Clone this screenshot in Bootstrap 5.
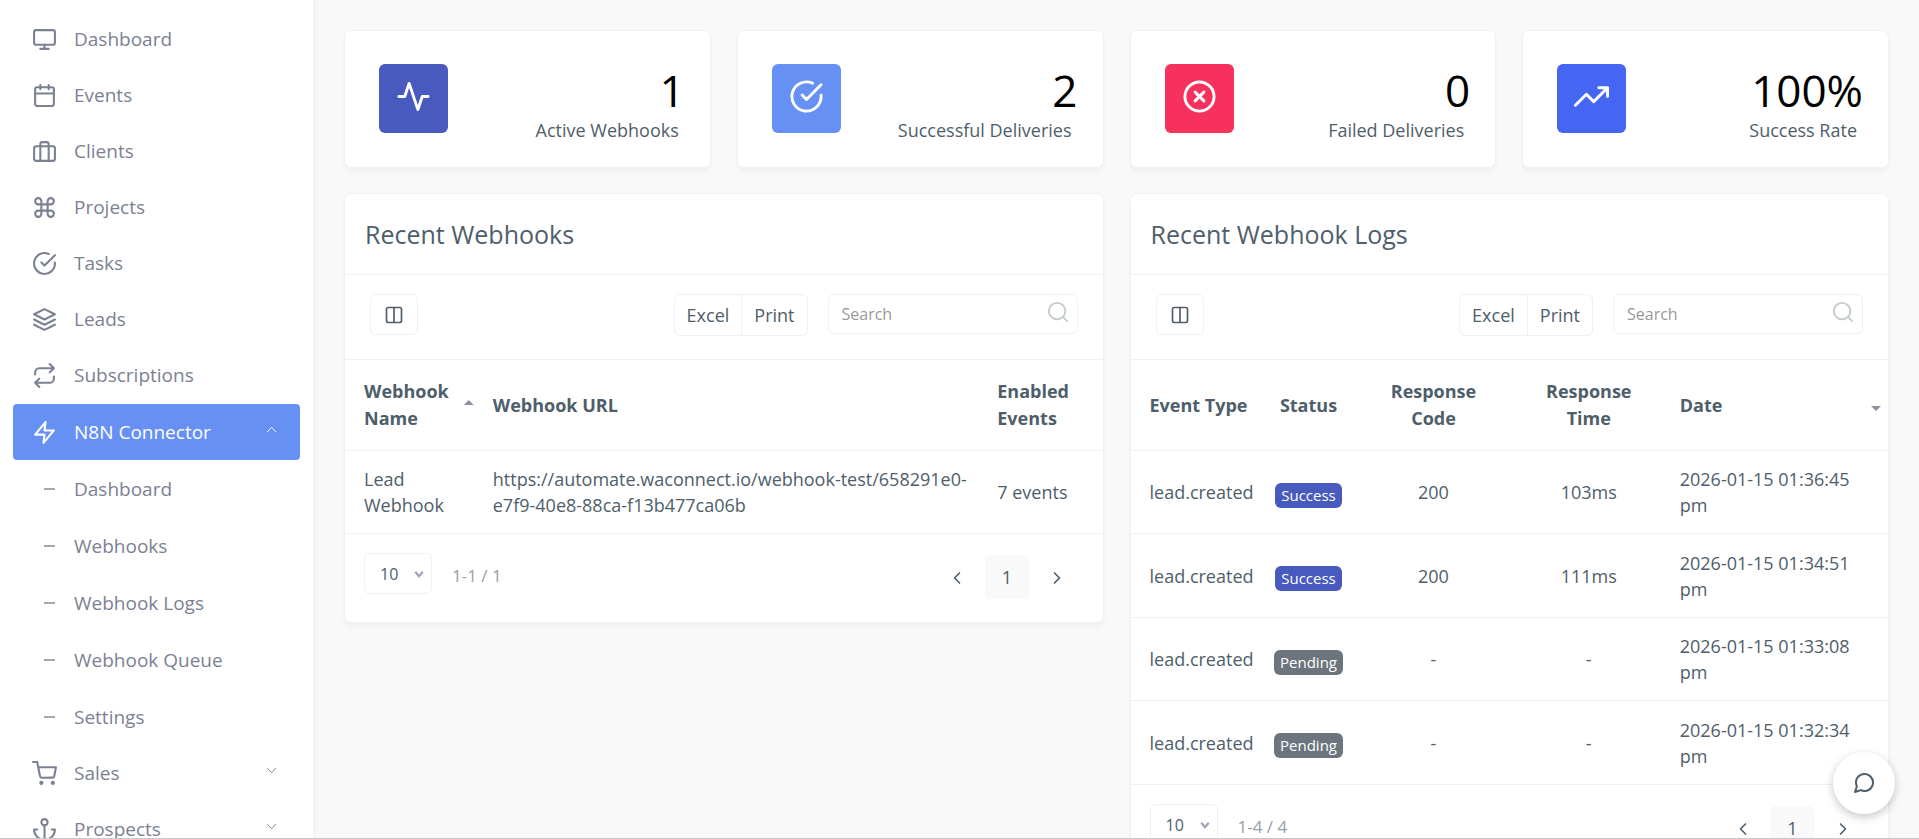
<!DOCTYPE html>
<html lang="en">
<head>
<meta charset="utf-8">
<meta name="viewport" content="width=device-width, initial-scale=1">
<title>N8N Connector</title>
<link href="https://cdn.jsdelivr.net/npm/bootstrap@5.3.0/dist/css/bootstrap.min.css" rel="stylesheet">
<style>
  :root { --ink: #4e5e6a; --line: #f0f0f4; --side: #7b8192; --accent: #6690f4; --indigo: #485abd; }
  body { font-family: "Open Sans", "Noto Sans", sans-serif; font-size: 18px; line-height: 26px; color: var(--ink); background: #f9f9f9; }
  svg.ico { width: 24px; height: 24px; fill: none; stroke: currentColor; stroke-width: 2; stroke-linecap: round; stroke-linejoin: round; flex: none; }
  a { color: inherit; text-decoration: none; }

  /* sidebar */
  .sidebar { width: 313px; padding: 11px 13px 0; color: var(--side); background: #fff; box-shadow: 0 0 10px rgba(0,0,0,.06); z-index: 2; }
  .side-link { height: 56px; padding: 0 20px 0 19px; gap: 17px; border-radius: 4px; font-size: 19px; }
  .side-link svg.ico { width: 25px; height: 25px; stroke-width: 2; }
  .side-link svg.caret { width: 11px; height: 11px; margin: 0 3px 5px auto; }
  .side-link.current { margin-top: 1px; color: #fff; background: var(--accent); }
  .sub-link { height: 57px; padding-left: 31px; gap: 19px; font-size: 19px; }
  .sub-link::before { content: ""; width: 11px; height: 2px; background: currentColor; opacity: .7; }

  /* content */
  .content { padding: 30px 30px 0 31px; scrollbar-width: none; }
  .content::-webkit-scrollbar { display: none; }
  .tiles { --bs-gutter-x: 26px; --bs-gutter-y: 25px; }
  .panel { background: #fff; border: 1px solid #f2f2f4; border-radius: 7px; box-shadow: 0 3px 5px rgba(0,0,0,.04); }
  .stat { height: 138px; padding: 33px 25px 0 34px; }
  .stat-icon { width: 69px; height: 69px; border-radius: 6px; color: #fff; padding-bottom: 4px; }
  .stat-icon svg.ico { width: 35px; height: 35px; }
  .stat-num { font-size: 44px; line-height: 53px; color: #000; }
  .stat-label { padding-right: 6px; }
  .bg-indigo { background: var(--indigo); }
  .bg-sky { background: var(--accent); }
  .bg-rose { background: #f6325c; }
  .bg-royal { background: #4566f2; }

  .panel-head { height: 81px; padding: 0 20px; border-bottom: 1px solid var(--line); }
  .panel-head h1 { font-size: 25px; line-height: 34px; margin: 0; font-weight: 400; }
  .tools { height: 84px; padding: 19px 25px 0; }
  .tools .btn, .pager .btn { --bs-btn-color: var(--ink); --bs-btn-border-color: var(--line); --bs-btn-font-size: 18px; --bs-btn-line-height: 24px; border-radius: 6px; }
  .tools .btn-cols { width: 48px; height: 41px; padding: 0; }
  .btn-cols svg.ico { width: 20px; height: 20px; }
  .tools .btn-group .btn { height: 42px; padding: 0 12px; }
  .search-box { width: 250px; margin-left: 20px; }
  .search-box input { height: 40px; padding: 0 40px 0 13px; border: 1px solid var(--line); border-radius: 6px; font-size: 16px; color: var(--ink); }
  .search-box input::placeholder { color: #999; opacity: 1; }
  .search-box svg.ico { position: absolute; right: 9px; top: 7px; width: 22px; height: 22px; color: #c3cbce; }

  .grid { --bs-table-bg: transparent; --bs-table-color: var(--ink); table-layout: fixed; color: var(--ink); border-color: var(--line); }
  .grid th, .grid td { padding: 15px 19px; border-bottom: 1px solid var(--line); vertical-align: middle; height: 83px; }
  .grid tr:nth-child(even) td { height: 84px; }
  .grid th { height: 91px; line-height: 27px; font-weight: 700; border-top: 1px solid var(--line); position: relative; }
  .grid td.tight, .grid th.tight { padding-left: 0; padding-right: 0; }
  .grid .sort { position: absolute; width: 10px; height: 5px; background: #8d919e; right: 0; top: 40px; clip-path: polygon(50% 0, 100% 100%, 0 100%); }
  .grid .sort-down { right: 7px; top: 46px; clip-path: polygon(0 0, 100% 0, 50% 100%); }
  .tag { --bs-badge-font-size: 15px; --bs-badge-font-weight: 400; --bs-badge-padding-x: 6px; --bs-badge-padding-y: 5px; line-height: 15px; margin-top: 6px; }
  .tag-grey { background: #6c757d; }

  .panel-foot { height: 88px; padding: 19px 23px 0 19px; }
  .panel-foot select { width: 68px; height: 41px; padding: 0 0 0 15px; border-color: var(--line); border-radius: 6px; color: var(--ink); font-size: 16px; background-size: 12px; background-position: right 6px center;
    background-image: url("data:image/svg+xml,%3Csvg xmlns='http://www.w3.org/2000/svg' viewBox='0 0 16 16'%3E%3Cpath fill='none' stroke='%23a3a3ba' stroke-width='3' d='M3 5l5 6 5-6'/%3E%3C/svg%3E"); }
  .count { margin: 9px 0 0 20px; color: #98a0a8; font-size: 17px; line-height: 28px; }
  .pager { gap: 5px; margin-top: 2px; }
  .pager .btn { width: 45px; height: 44px; padding: 0; border: 0; }
  .pager .btn.on { background: #f9f9f9; }
  .pager svg.ico { width: 20px; height: 20px; margin-bottom: 2px; }

  .chat { position: fixed; right: 24px; bottom: 25px; width: 62px; height: 62px; border: 0; border-radius: 50%; background: #fff; color: var(--ink); box-shadow: 0 3px 10px rgba(0,0,0,.22); z-index: 5; }
  .edge { height: 1px; background: #c8c8ca; }
</style>
</head>
<body>
<svg class="d-none" xmlns="http://www.w3.org/2000/svg">
  <symbol id="monitor" viewBox="0 0 24 24"><rect x="2" y="3" width="20" height="14" rx="2"/><path d="M8 21h8M12 17v4"/></symbol>
  <symbol id="calendar" viewBox="0 0 24 24"><rect x="3" y="4" width="18" height="18" rx="2"/><path d="M16 2v4M8 2v4M3 10h18"/></symbol>
  <symbol id="briefcase" viewBox="0 0 24 24"><rect x="2" y="7" width="20" height="14" rx="2"/><path d="M16 21V5a2 2 0 0 0-2-2h-4a2 2 0 0 0-2 2v16"/></symbol>
  <symbol id="command" viewBox="0 0 24 24"><path d="M18 3a3 3 0 0 0-3 3v12a3 3 0 1 0 3-3H6a3 3 0 1 0 3 3V6a3 3 0 1 0-3 3h12a3 3 0 0 0 0-6z"/></symbol>
  <symbol id="check" viewBox="0 0 24 24"><path d="M22 11.08V12a10 10 0 1 1-5.93-9.14"/><path d="M22 4L12 14.01l-3-3"/></symbol>
  <symbol id="layers" viewBox="0 0 24 24"><path d="M12 2L2 7l10 5 10-5zM2 17l10 5 10-5M2 12l10 5 10-5"/></symbol>
  <symbol id="repeat" viewBox="0 0 24 24"><path d="M17 1l4 4-4 4M3 11V9a4 4 0 0 1 4-4h14M7 23l-4-4 4-4M21 13v2a4 4 0 0 1-4 4H3"/></symbol>
  <symbol id="zap" viewBox="0 0 24 24"><path d="M13 2L3 14h9l-1 8 10-12h-9z"/></symbol>
  <symbol id="cart" viewBox="0 0 24 24"><circle cx="9" cy="21" r="1"/><circle cx="20" cy="21" r="1"/><path d="M1 1h4l2.68 13.39a2 2 0 0 0 2 1.61h9.72a2 2 0 0 0 2-1.61L23 6H6"/></symbol>
  <symbol id="anchor" viewBox="0 0 24 24"><circle cx="12" cy="5" r="3"/><path d="M12 22V8M5 12H2a10 10 0 0 0 20 0h-3"/></symbol>
  <symbol id="up" viewBox="0 0 24 24"><path d="M3 17l9-10 9 10"/></symbol>
  <symbol id="down" viewBox="0 0 24 24"><path d="M3 7l9 10 9-10"/></symbol>
  <symbol id="activity" viewBox="0 0 24 24"><path d="M22 12h-4l-3 9L9 3l-3 9H2"/></symbol>
  <symbol id="cross" viewBox="0 0 24 24"><circle cx="12" cy="12" r="10"/><path d="M15 9l-6 6M9 9l6 6"/></symbol>
  <symbol id="trend" viewBox="0 0 24 24"><path d="M23 6l-9.500 9.500-5-5L1 18M17 6h6v6"/></symbol>
  <symbol id="columns" viewBox="0 0 24 24"><path d="M12 3h7a2 2 0 0 1 2 2v14a2 2 0 0 1-2 2h-7m0-18H5a2 2 0 0 0-2 2v14a2 2 0 0 0 2 2h7m0-18v18"/></symbol>
  <symbol id="search" viewBox="0 0 24 24"><circle cx="11" cy="11" r="9"/><path d="M22 22l-4-4"/></symbol>
  <symbol id="prev" viewBox="0 0 24 24"><path d="M15 18l-6-6 6-6"/></symbol>
  <symbol id="next" viewBox="0 0 24 24"><path d="M9 18l6-6-6-6"/></symbol>
  <symbol id="bubble" viewBox="0 0 24 24"><path d="M21 11.500a8.380 8.380 0 0 1-.9 3.800 8.500 8.500 0 0 1-7.600 4.700 8.380 8.380 0 0 1-3.800-.9L3 21l1.900-5.700a8.380 8.380 0 0 1-.9-3.800 8.500 8.500 0 0 1 4.700-7.600 8.380 8.380 0 0 1 3.800-.9h.5a8.480 8.480 0 0 1 8 8z"/></symbol>
</svg>

<div class="d-flex vh-100 overflow-hidden">
  <nav class="sidebar flex-shrink-0 overflow-hidden" aria-label="Main">
    <a class="side-link d-flex align-items-center" href="#"><svg class="ico"><use href="#monitor"/></svg>Dashboard</a>
    <a class="side-link d-flex align-items-center" href="#"><svg class="ico"><use href="#calendar"/></svg>Events</a>
    <a class="side-link d-flex align-items-center" href="#"><svg class="ico"><use href="#briefcase"/></svg>Clients</a>
    <a class="side-link d-flex align-items-center" href="#"><svg class="ico"><use href="#command"/></svg>Projects</a>
    <a class="side-link d-flex align-items-center" href="#"><svg class="ico"><use href="#check"/></svg>Tasks</a>
    <a class="side-link d-flex align-items-center" href="#"><svg class="ico"><use href="#layers"/></svg>Leads</a>
    <a class="side-link d-flex align-items-center" href="#"><svg class="ico"><use href="#repeat"/></svg>Subscriptions</a>
    <a class="side-link current d-flex align-items-center" href="#"><svg class="ico"><use href="#zap"/></svg>N8N Connector<svg class="ico caret"><use href="#up"/></svg></a>
    <a class="sub-link d-flex align-items-center" href="#">Dashboard</a>
    <a class="sub-link d-flex align-items-center" href="#">Webhooks</a>
    <a class="sub-link d-flex align-items-center" href="#">Webhook Logs</a>
    <a class="sub-link d-flex align-items-center" href="#">Webhook Queue</a>
    <a class="sub-link d-flex align-items-center" href="#">Settings</a>
    <a class="side-link d-flex align-items-center" href="#"><svg class="ico"><use href="#cart"/></svg>Sales<svg class="ico caret"><use href="#down"/></svg></a>
    <a class="side-link d-flex align-items-center" href="#"><svg class="ico"><use href="#anchor"/></svg>Prospects<svg class="ico caret"><use href="#down"/></svg></a>
  </nav>

  <main class="content flex-grow-1 overflow-auto">
    <div class="row tiles">
      <div class="col-3"><div class="panel stat d-flex justify-content-between">
        <div class="stat-icon bg-indigo d-flex align-items-center justify-content-center"><svg class="ico"><use href="#activity"/></svg></div>
        <div class="text-end"><div class="stat-num">1</div><div class="stat-label">Active Webhooks</div></div>
      </div></div>
      <div class="col-3"><div class="panel stat d-flex justify-content-between">
        <div class="stat-icon bg-sky d-flex align-items-center justify-content-center"><svg class="ico"><use href="#check"/></svg></div>
        <div class="text-end"><div class="stat-num">2</div><div class="stat-label">Successful Deliveries</div></div>
      </div></div>
      <div class="col-3"><div class="panel stat d-flex justify-content-between">
        <div class="stat-icon bg-rose d-flex align-items-center justify-content-center"><svg class="ico"><use href="#cross"/></svg></div>
        <div class="text-end"><div class="stat-num">0</div><div class="stat-label">Failed Deliveries</div></div>
      </div></div>
      <div class="col-3"><div class="panel stat d-flex justify-content-between">
        <div class="stat-icon bg-royal d-flex align-items-center justify-content-center"><svg class="ico"><use href="#trend"/></svg></div>
        <div class="text-end"><div class="stat-num">100%</div><div class="stat-label">Success Rate</div></div>
      </div></div>

      <div class="col-6"><section class="panel">
        <div class="panel-head d-flex align-items-center"><h1>Recent Webhooks</h1></div>
        <div class="tools d-flex align-items-start">
          <button type="button" class="btn btn-cols d-flex align-items-center justify-content-center" aria-label="Columns"><svg class="ico"><use href="#columns"/></svg></button>
          <div class="btn-group ms-auto"><button type="button" class="btn">Excel</button><button type="button" class="btn">Print</button></div>
          <div class="search-box position-relative"><input type="search" class="w-100" placeholder="Search" aria-label="Search webhooks"><svg class="ico"><use href="#search"/></svg></div>
        </div>
        <table class="table grid mb-0">
          <colgroup><col style="width:17%"><col><col style="width:16.400%"></colgroup>
          <thead><tr><th>Webhook Name<span class="sort"></span></th><th>Webhook URL</th><th>Enabled Events</th></tr></thead>
          <tbody><tr><td>Lead Webhook</td><td class="pe-2">https://automate.waconnect.io/webhook-test/658291e0-e7f9-40e8-88ca-f13b477ca06b</td><td>7 events</td></tr></tbody>
        </table>
        <div class="panel-foot d-flex align-items-start">
          <select class="form-select" aria-label="Webhooks per page"><option>10</option></select>
          <div class="count">1-1 / 1</div>
          <div class="pager d-flex ms-auto">
            <button type="button" class="btn" aria-label="Previous"><svg class="ico"><use href="#prev"/></svg></button>
            <button type="button" class="btn on">1</button>
            <button type="button" class="btn" aria-label="Next"><svg class="ico"><use href="#next"/></svg></button>
          </div>
        </div>
      </section></div>

      <div class="col-6"><section class="panel">
        <div class="panel-head d-flex align-items-center"><h1>Recent Webhook Logs</h1></div>
        <div class="tools d-flex align-items-start">
          <button type="button" class="btn btn-cols d-flex align-items-center justify-content-center" aria-label="Columns"><svg class="ico"><use href="#columns"/></svg></button>
          <div class="btn-group ms-auto"><button type="button" class="btn">Excel</button><button type="button" class="btn">Print</button></div>
          <div class="search-box position-relative"><input type="search" class="w-100" placeholder="Search" aria-label="Search logs"><svg class="ico"><use href="#search"/></svg></div>
        </div>
        <table class="table grid mb-0">
          <colgroup><col style="width:18%"><col style="width:11%"><col style="width:22%"><col style="width:19%"><col></colgroup>
          <thead><tr><th class="pe-0">Event Type</th><th class="tight text-center">Status</th><th class="text-center">Response Code</th><th class="text-center">Response Time</th><th>Date<span class="sort sort-down"></span></th></tr></thead>
          <tbody>
            <tr><td class="pe-0">lead.created</td><td class="tight text-center"><span class="badge tag bg-indigo">Success</span></td><td class="text-center">200</td><td class="text-center">103ms</td><td>2026-01-15 01:36:45 pm</td></tr>
            <tr><td class="pe-0">lead.created</td><td class="tight text-center"><span class="badge tag bg-indigo">Success</span></td><td class="text-center">200</td><td class="text-center">111ms</td><td>2026-01-15 01:34:51 pm</td></tr>
            <tr><td class="pe-0">lead.created</td><td class="tight text-center"><span class="badge tag tag-grey">Pending</span></td><td class="text-center">-</td><td class="text-center">-</td><td>2026-01-15 01:33:08 pm</td></tr>
            <tr><td class="pe-0">lead.created</td><td class="tight text-center"><span class="badge tag tag-grey">Pending</span></td><td class="text-center">-</td><td class="text-center">-</td><td>2026-01-15 01:32:34 pm</td></tr>
          </tbody>
        </table>
        <div class="panel-foot d-flex align-items-start">
          <select class="form-select" aria-label="Logs per page"><option>10</option></select>
          <div class="count">1-4 / 4</div>
          <div class="pager d-flex ms-auto">
            <button type="button" class="btn" aria-label="Previous"><svg class="ico"><use href="#prev"/></svg></button>
            <button type="button" class="btn on">1</button>
            <button type="button" class="btn" aria-label="Next"><svg class="ico"><use href="#next"/></svg></button>
          </div>
        </div>
      </section></div>
    </div>
  </main>
</div>
<button type="button" class="chat d-flex align-items-center justify-content-center" aria-label="Messages"><svg class="ico"><use href="#bubble"/></svg></button>
<div class="edge fixed-bottom"></div>
<script src="https://cdn.jsdelivr.net/npm/bootstrap@5.3.0/dist/js/bootstrap.bundle.min.js"></script>
</body>
</html>
